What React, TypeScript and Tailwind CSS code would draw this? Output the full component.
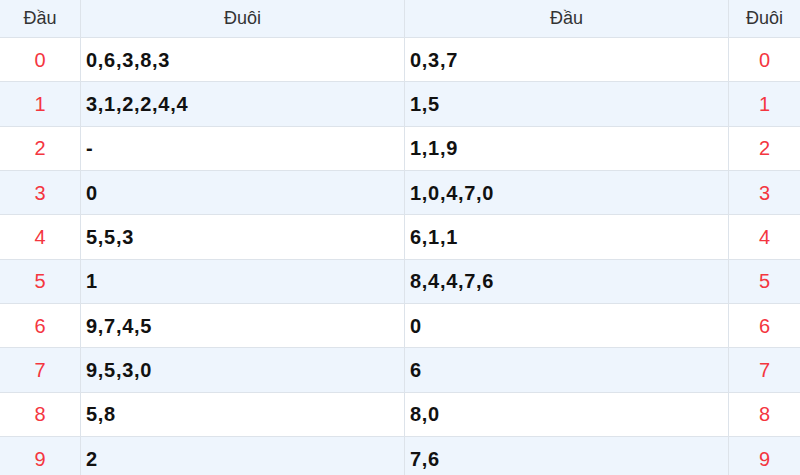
const rows: [string, string, string, string][] = [
  ["0", "0,6,3,8,3", "0,3,7", "0"],
  ["1", "3,1,2,2,4,4", "1,5", "1"],
  ["2", "-", "1,1,9", "2"],
  ["3", "0", "1,0,4,7,0", "3"],
  ["4", "5,5,3", "6,1,1", "4"],
  ["5", "1", "8,4,4,7,6", "5"],
  ["6", "9,7,4,5", "0", "6"],
  ["7", "9,5,3,0", "6", "7"],
  ["8", "5,8", "8,0", "8"],
  ["9", "2", "7,6", "9"],
];

const cols = "grid grid-cols-[80px_324px_324px_72px]";

export default function App() {
  return (
    <main className="h-[475px] w-[800px] overflow-hidden bg-white font-['Liberation_Sans',Arial,sans-serif]">
      {/* header */}
      <div className={`${cols} h-[38px] border-b border-[#dde3ea] bg-[#eef5fd] text-[18px] text-[#333]`}>
        <div className="flex items-center justify-center">Đầu</div>
        <div className="flex items-center justify-center border-l border-[#dde3ea]">Đuôi</div>
        <div className="flex items-center justify-center border-l border-[#dde3ea]">Đầu</div>
        <div className="flex items-center justify-center border-l border-[#dde3ea]">Đuôi</div>
      </div>

      {rows.map(([a, b, c, d], i) => (
        <div
          key={i}
          className={`${cols} h-[44.33px] border-b border-[#dde3ea] ${i % 2 === 1 ? "bg-[#eef5fd]" : "bg-white"}`}
        >
          <div className="flex items-center justify-center text-[20px] text-[#f4363f]">{a}</div>
          <div className="flex items-center border-l border-[#dde3ea] pl-[5px] text-[20px] font-bold tracking-[0.7px] text-[#111]">
            {b}
          </div>
          <div className="flex items-center border-l border-[#dde3ea] pl-[5px] text-[20px] font-bold tracking-[0.7px] text-[#111]">
            {c}
          </div>
          <div className="flex items-center justify-center border-l border-[#dde3ea] text-[20px] text-[#f4363f]">{d}</div>
        </div>
      ))}
    </main>
  );
}
